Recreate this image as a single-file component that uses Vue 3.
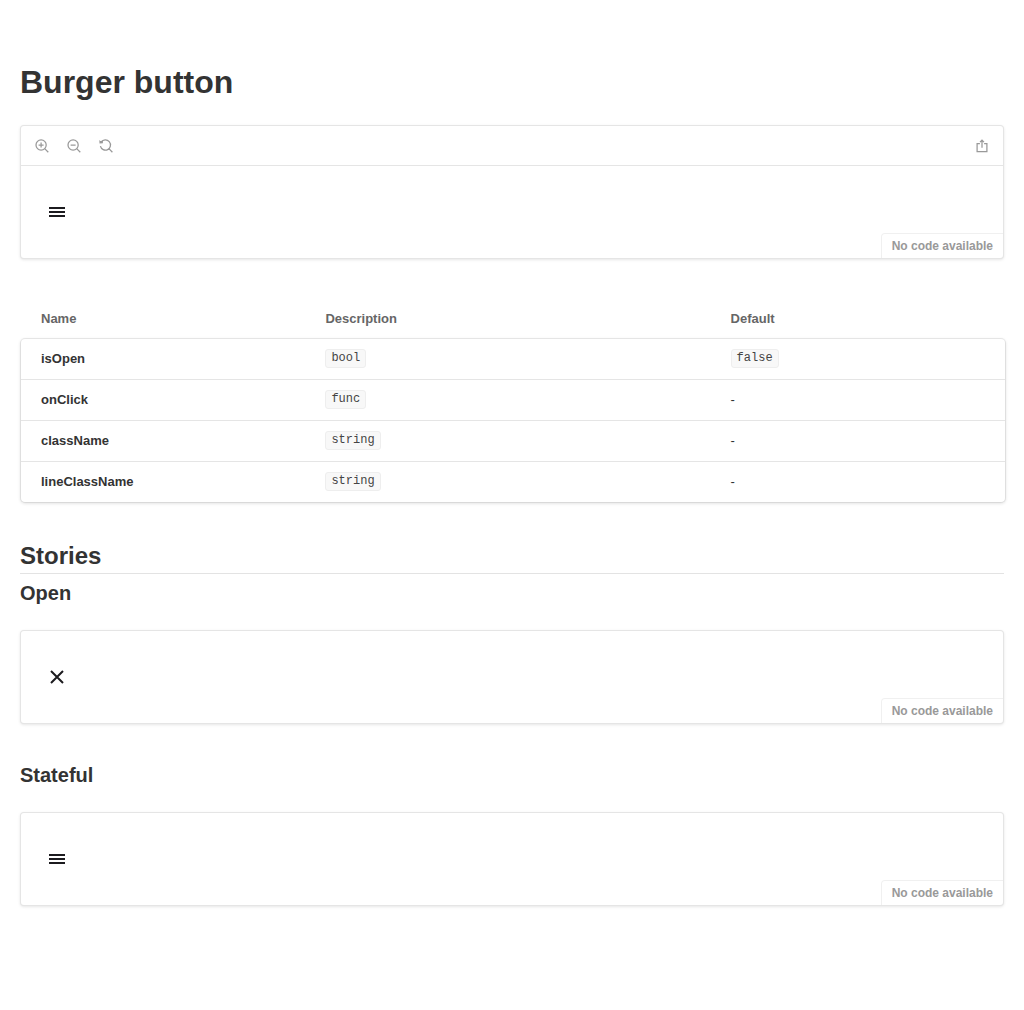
<script setup>
const rows = [
  { name: 'isOpen', type: 'bool', value: 'false' },
  { name: 'onClick', type: 'func' },
  { name: 'className', type: 'string' },
  { name: 'lineClassName', type: 'string' },
]
</script>

<template>
  <main class="docs">
    <h1>Burger button</h1>

    <section class="preview">
      <div class="toolbar">
        <div class="zoom-tools">
          <svg class="icon" viewBox="0 0 14 14">
            <circle cx="6.1" cy="6" r="5.1" />
            <path d="M9.7 9.6 13.3 13.2M6.1 3.5v5M3.6 6h5" />
          </svg>
          <svg class="icon" viewBox="0 0 14 14">
            <circle cx="6.1" cy="6" r="5.1" />
            <path d="M9.7 9.6 13.3 13.2M3.6 6h5" />
          </svg>
          <svg class="icon" viewBox="0 0 14 14">
            <path d="M2.2 3.1A5.1 5.1 0 1 1 1.4 7.2M9.9 9.6 13.4 13.2" />
            <path class="solid" d="M.3 1 1.3 1.9 3.9 1.7 3.9 4.3.5 4.6Z" />
          </svg>
        </div>
        <svg class="icon" viewBox="0 0 14 14">
          <path d="M4.9 4.5H2.1v8h9.8v-8H9.1M7 1.5v7.3M5 3.1 7 1.2 9 3.1" />
        </svg>
      </div>
      <div class="canvas">
        <span class="burger"><i></i><i></i><i></i></span>
        <span class="code">No code available</span>
      </div>
    </section>

    <div class="table">
      <div class="row head"><span>Name</span><span>Description</span><span>Default</span></div>
      <div class="table-body">
        <div v-for="row in rows" :key="row.name" class="row">
          <b>{{ row.name }}</b>
          <span><code>{{ row.type }}</code></span>
          <span><code v-if="row.value">{{ row.value }}</code><template v-else>-</template></span>
        </div>
      </div>
    </div>

    <h2>Stories</h2>
    <h3>Open</h3>
    <section class="preview">
      <div class="canvas">
        <svg class="close" viewBox="0 0 16 16"><path d="M2 2 14 14M14 2 2 14" /></svg>
        <span class="code">No code available</span>
      </div>
    </section>
    <h3>Stateful</h3>
    <section class="preview">
      <div class="canvas">
        <span class="burger"><i></i><i></i><i></i></span>
        <span class="code">No code available</span>
      </div>
    </section>
  </main>
</template>

<style>
body { margin: 0; background: #fff; }
</style>

<style scoped>
* { box-sizing: border-box; }
.docs {
  min-height: 1010px;
  padding: 64px 20px;
  color: #333;
  font-family: "Liberation Sans", Arial, sans-serif;
  font-size: 13px;
}
h1, h2, h3 { margin: 0; font-weight: 700; }
h1 { font-size: 32px; line-height: 36px; }
h2 { height: 34px; font-size: 24px; line-height: 28px; border-bottom: 1px solid #e3e3e3; padding-top: 2px; }
h3 { font-size: 20px; line-height: 20px; padding-top: 9px; height: 31px; }
.preview {
  margin: 25px 0 32px;
  border: 1px solid rgba(0, 0, 0, 0.1);
  border-radius: 4px;
  box-shadow: rgba(0, 0, 0, 0.1) 0 1px 3px 0;
  background: #fff;
}
.toolbar {
  display: flex;
  align-items: center;
  justify-content: space-between;
  height: 40px;
  padding: 0 14px;
  border-bottom: 1px solid #e5e5e5;
}
.zoom-tools { display: flex; gap: 18px; }
.icon { display: block; width: 14px; height: 14px; fill: none; stroke: #999; stroke-width: 1.25; }
.icon .solid { fill: #999; stroke: none; }
.canvas { position: relative; display: flex; align-items: center; height: 92px; padding-left: 28px; }
.burger { display: flex; flex-direction: column; gap: 2px; width: 16px; }
.burger i { height: 2px; background: #1c1b1f; }
.close { width: 16px; height: 16px; stroke: #1c1b1f; stroke-width: 2; }
.code {
  position: absolute;
  right: 0;
  bottom: 0;
  height: 25px;
  padding: 4px 10px;
  border: solid rgba(0, 0, 0, 0.06);
  border-width: 1px 0 0 1px;
  border-radius: 4px 0 0 0;
  color: #999;
  font-size: 12px;
  font-weight: 700;
  line-height: 16px;
}
.table { width: 984px; margin: 40px 0 38px 1px; }
.row {
  display: grid;
  grid-template-columns: 284.4px 405.2px 1fr;
  height: 41px;
  padding-left: 20px;
  line-height: 20px;
  padding-top: 10px;
}
.head { height: 40px; color: #666; font-weight: 700; }
.table-body {
  border-radius: 4px;
  background: #fff;
  box-shadow: rgba(0, 0, 0, 0.1) 0 1px 3px 1px, rgba(0, 0, 0, 0.065) 0 0 0 1px;
}
.table-body .row + .row { border-top: 1px solid #e5e5e5; }
.table-body .row:first-child { height: 40px; }
code {
  display: block;
  width: max-content;
  height: 19px;
  padding: 0 5px;
  border: 1px solid #eee;
  border-radius: 3px;
  background: #f8f8f8;
  color: #444;
  font: 12px/17px "Liberation Mono", monospace;
}
.table-body .row:nth-child(n + 3) code { line-height: 16px; }
</style>
